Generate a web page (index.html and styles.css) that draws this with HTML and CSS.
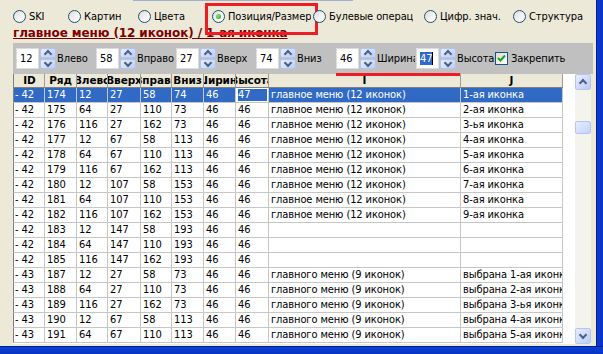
FILE: index.html
```html
<!DOCTYPE html>
<html lang="ru">
<head>
    <meta charset="UTF-8">
    <meta name="viewport" content="width=device-width, initial-scale=1.0">
    <title>Позиция/Размер</title>
    <link rel="stylesheet" href="styles.css">
</head>
<body>
    <div class="window">
        <div class="client">
            <div class="topline"></div>
            <div class="radios">
                <div class="radio opt-ski"><span class="dot"></span><span class="text">SKI</span></div>
                <div class="radio opt-pic"><span class="dot"></span><span class="text">Картинки</span></div>
                <div class="radio opt-color"><span class="dot"></span><span class="text">Цвета</span></div>
                <div class="radio opt-pos on"><span class="dot"></span><span class="text">Позиция/Размер</span></div>
                <div class="radio opt-bool"><span class="dot"></span><span class="text">Булевые операции</span></div>
                <div class="radio opt-num"><span class="dot"></span><span class="text">Цифр. знач.</span></div>
                <div class="radio opt-struct"><span class="dot"></span><span class="text">Структура</span></div>
            </div>
            <div class="title">главное меню (12 иконок) / 1-ая иконка</div>
            <div class="toolbar">
                <div class="spin-group">
                    <div class="edit">12</div>
                    <div class="spin"><span class="up"></span><span class="down"></span></div>
                    <div class="spin-label">Влево</div>
                </div>
                <div class="spin-group">
                    <div class="edit">58</div>
                    <div class="spin"><span class="up"></span><span class="down"></span></div>
                    <div class="spin-label">Вправо</div>
                </div>
                <div class="spin-group">
                    <div class="edit">27</div>
                    <div class="spin"><span class="up"></span><span class="down"></span></div>
                    <div class="spin-label">Вверх</div>
                </div>
                <div class="spin-group">
                    <div class="edit">74</div>
                    <div class="spin"><span class="up"></span><span class="down"></span></div>
                    <div class="spin-label">Вниз</div>
                </div>
                <div class="spin-group">
                    <div class="edit">46</div>
                    <div class="spin"><span class="up"></span><span class="down"></span></div>
                    <div class="spin-label">Ширина</div>
                </div>
                <div class="spin-group">
                    <div class="edit"><span class="sel">47</span><span class="caret"></span></div>
                    <div class="spin"><span class="up"></span><span class="down"></span></div>
                    <div class="spin-label">Высота</div>
                </div>
                <div class="check">
                    <span class="box">
                        <svg width="9" height="9" viewBox="0 0 9 9"><polyline points="1,4 3.5,6.5 8,1.5" fill="none" stroke="#21a121" stroke-width="2"/></svg>
                    </span>
                    <span>Закрепить</span>
                </div>
                <div class="mark"></div>
            </div>
            <div class="grid">
                <table class="data">
                    <thead>
                        <tr>
                            <th class="c-id"><div><span>ID</span></div></th>
                            <th class="c-n"><div><span>Ряд</span></div></th>
                            <th class="c-s"><div><span>Влево</span></div></th>
                            <th class="c-w"><div><span>Вверх</span></div></th>
                            <th class="c-s"><div><span>Вправо</span></div></th>
                            <th class="c-n"><div><span>Вниз</span></div></th>
                            <th class="c-n"><div><span>Ширина</span></div></th>
                            <th class="c-w"><div><span>Высота</span></div></th>
                            <th class="c-i"><div><span>I</span></div></th>
                            <th class="c-j"><div><span>J</span></div></th>
                        </tr>
                    </thead>
                    <tbody>
                        <tr class="current"><td>- 42</td><td>174</td><td>12</td><td>27</td><td>58</td><td>74</td><td>46</td><td class="editing"><span>47</span></td><td>главное меню (12 иконок)</td><td>1-ая иконка</td></tr>
                        <tr><td>- 42</td><td>175</td><td>64</td><td>27</td><td>110</td><td>73</td><td>46</td><td>46</td><td>главное меню (12 иконок)</td><td>2-ая иконка</td></tr>
                        <tr><td>- 42</td><td>176</td><td>116</td><td>27</td><td>162</td><td>73</td><td>46</td><td>46</td><td>главное меню (12 иконок)</td><td>3-ья иконка</td></tr>
                        <tr><td>- 42</td><td>177</td><td>12</td><td>67</td><td>58</td><td>113</td><td>46</td><td>46</td><td>главное меню (12 иконок)</td><td>4-ая иконка</td></tr>
                        <tr><td>- 42</td><td>178</td><td>64</td><td>67</td><td>110</td><td>113</td><td>46</td><td>46</td><td>главное меню (12 иконок)</td><td>5-ая иконка</td></tr>
                        <tr><td>- 42</td><td>179</td><td>116</td><td>67</td><td>162</td><td>113</td><td>46</td><td>46</td><td>главное меню (12 иконок)</td><td>6-ая иконка</td></tr>
                        <tr><td>- 42</td><td>180</td><td>12</td><td>107</td><td>58</td><td>153</td><td>46</td><td>46</td><td>главное меню (12 иконок)</td><td>7-ая иконка</td></tr>
                        <tr><td>- 42</td><td>181</td><td>64</td><td>107</td><td>110</td><td>153</td><td>46</td><td>46</td><td>главное меню (12 иконок)</td><td>8-ая иконка</td></tr>
                        <tr><td>- 42</td><td>182</td><td>116</td><td>107</td><td>162</td><td>153</td><td>46</td><td>46</td><td>главное меню (12 иконок)</td><td>9-ая иконка</td></tr>
                        <tr><td>- 42</td><td>183</td><td>12</td><td>147</td><td>58</td><td>193</td><td>46</td><td>46</td><td></td><td></td></tr>
                        <tr><td>- 42</td><td>184</td><td>64</td><td>147</td><td>110</td><td>193</td><td>46</td><td>46</td><td></td><td></td></tr>
                        <tr><td>- 42</td><td>185</td><td>116</td><td>147</td><td>162</td><td>193</td><td>46</td><td>46</td><td></td><td></td></tr>
                        <tr><td>- 43</td><td>187</td><td>12</td><td>27</td><td>58</td><td>73</td><td>46</td><td>46</td><td>главного меню (9 иконок)</td><td>выбрана 1-ая иконка</td></tr>
                        <tr><td>- 43</td><td>188</td><td>64</td><td>27</td><td>110</td><td>73</td><td>46</td><td>46</td><td>главного меню (9 иконок)</td><td>выбрана 2-ая иконка</td></tr>
                        <tr><td>- 43</td><td>189</td><td>116</td><td>27</td><td>162</td><td>73</td><td>46</td><td>46</td><td>главного меню (9 иконок)</td><td>выбрана 3-ья иконка</td></tr>
                        <tr><td>- 43</td><td>190</td><td>12</td><td>67</td><td>58</td><td>113</td><td>46</td><td>46</td><td>главного меню (9 иконок)</td><td>выбрана 4-ая иконка</td></tr>
                        <tr><td>- 43</td><td>191</td><td>64</td><td>67</td><td>110</td><td>113</td><td>46</td><td>46</td><td>главного меню (9 иконок)</td><td>выбрана 5-ая иконка</td></tr>
                    </tbody>
                </table>
                <div class="scrollbar">
                    <div class="sb-btn up"></div>
                    <div class="sb-track"><div class="sb-thumb"></div></div>
                    <div class="sb-btn down"></div>
                </div>
            </div>
        </div>
        <div class="frame-right"></div>
    </div>
    <div class="frame-bottom"></div>
</body>
</html>
```

FILE: styles.css
```css
* {
    box-sizing: border-box;
}
body {
    margin: 0;
    width: 603px;
    height: 354px;
    overflow: hidden;
    background-color: #ece9d8;
    font-family: "DejaVu Sans Condensed", "DejaVu Sans", sans-serif;
    font-stretch: semi-condensed;
    font-size: 11px;
    letter-spacing: -0.1px;
    color: #000;
}
.window {
    display: flex;
    height: 346px;
}
.client {
    width: 596px;
}
.frame-right {
    width: 7px;
    background: linear-gradient(to right, #0a3ad6, #0831c4);
    border-left: 1px solid #001f8c;
}
.frame-bottom {
    height: 8px;
    background: linear-gradient(#0a40d6, #0834c2);
    border-top: 1px solid #001f8c;
}
.topline {
    height: 1px;
    width: 220px;
    margin-left: 133px;
    background-color: #9fb2c9;
}

/* radio row */
.radios {
    display: flex;
    align-items: center;
    height: 16px;
    margin-top: 7px;
    padding-left: 13px;
}
.radio {
    position: relative;
    display: flex;
    align-items: center;
    gap: 3px;
    height: 16px;
    white-space: nowrap;
}
.radio .text {
    overflow: hidden;
    min-width: 0;
}
.opt-ski { width: 55px; }
.opt-pic { width: 53px; margin-right: 17px; }
.opt-color { width: 74px; }
.opt-pos { width: 101px; }
.opt-bool { width: 100px; margin-right: 11px; }
.opt-num { width: 89px; }
.dot {
    flex: none;
    width: 13px;
    height: 13px;
    border-radius: 50%;
    border: 1px solid #1c5180;
    background: linear-gradient(135deg, #dcdbd3, #f4f3ee 55%, #fff);
    display: flex;
    align-items: center;
    justify-content: center;
}
.radio.on .dot::before {
    content: "";
    width: 5px;
    height: 5px;
    border-radius: 50%;
    background: radial-gradient(circle at 35% 35%, #7de67d, #21a121);
}
.radio.on::after {
    content: "";
    position: absolute;
    left: -7px;
    top: -5px;
    width: 107px;
    height: 26px;
    border: 3px solid #ee1c25;
}

.title {
    height: 19px;
    line-height: 19px;
    margin-left: 13px;
    font-family: "DejaVu Sans", sans-serif;
    font-stretch: normal;
    font-size: 12px;
    font-weight: bold;
    letter-spacing: -0.1px;
    color: #800000;
    text-decoration: underline;
}

/* spinners */
.toolbar {
    position: relative;
    display: flex;
    align-items: center;
    width: 580px;
    height: 31px;
    margin-left: 13px;
    padding-left: 2px;
    background-color: #c0c0c0;
}
.spin-group {
    display: flex;
    align-items: center;
    width: 80px;
}
.edit {
    display: flex;
    align-items: center;
    width: 23px;
    height: 21px;
    margin-left: 1px;
    padding-left: 3px;
    background-color: #fff;
    border: 1px solid #dcdcdc;
}
.edit .sel {
    background-color: #316ac5;
    color: #fff;
}
.edit .caret {
    width: 1px;
    height: 13px;
    background-color: #000;
}
.spin {
    display: flex;
    flex-direction: column;
    gap: 1px;
    width: 16px;
    height: 21px;
    margin-left: 1px;
}
.spin span,
.sb-btn {
    flex: 1;
    display: flex;
    align-items: center;
    justify-content: center;
    border: 1px solid #b4c6f0;
    border-radius: 2px;
    background: linear-gradient(135deg, #e6edfe, #bacdf8);
}
.spin span::before,
.sb-btn::before {
    content: "";
    width: 4px;
    height: 4px;
    border-left: 2px solid #4d6185;
    border-top: 2px solid #4d6185;
}
.spin .up::before,
.sb-btn.up::before {
    transform: rotate(45deg);
    margin-top: 2px;
}
.spin .down::before,
.sb-btn.down::before {
    transform: rotate(225deg);
    margin-top: -2px;
}
.spin-label {
    width: 39px;
    padding-left: 1px;
    overflow: hidden;
    white-space: nowrap;
}
.check {
    display: flex;
    align-items: center;
    gap: 3px;
}
.box {
    display: flex;
    align-items: center;
    justify-content: center;
    width: 13px;
    height: 13px;
    border: 1px solid #1c5180;
    background: linear-gradient(135deg, #dcdbd3, #fff);
}
.mark {
    position: absolute;
    left: 323px;
    bottom: -2px;
    width: 124px;
    height: 3px;
    background-color: #ee1c25;
    z-index: 2;
}

/* grid */
.grid {
    display: flex;
    width: 578px;
    height: 270px;
    margin-left: 13px;
    background-color: #fff;
}
.data {
    align-self: flex-start;
    width: 550px;
    table-layout: fixed;
    border-collapse: separate;
    border-spacing: 0;
}
.data th,
.data td {
    padding: 0 0 0 2px;
    white-space: nowrap;
    overflow: hidden;
    text-align: left;
    font-weight: normal;
}
.data th {
    padding: 0;
    line-height: 13px;
    font-family: "DejaVu Sans", sans-serif;
    font-stretch: normal;
    font-size: 10.5px;
    font-weight: bold;
    background-color: #ece9d8;
    border-right: 1px solid #9d9c96;
    border-bottom: 1px solid #808080;
}
.data th div {
    display: flex;
    justify-content: center;
    width: 100%;
    overflow: clip;
}
.data th span {
    flex: none;
}
.data td {
    line-height: 14px;
    border-right: 1px solid #c6c6c6;
    border-bottom: 1px solid #c6c6c6;
}
.data th:first-child,
.data td:first-child {
    border-left: 1px solid #808080;
    padding-left: 1px;
}
.c-id { width: 32px; }
.c-n { width: 32px; }
.c-s { width: 31px; }
.c-w { width: 33px; }
.c-i { width: 192px; }
.c-j { width: 102px; }
.data tr.current td {
    background-color: #316ac5;
    color: #fff;
}
.data tr.current td.editing {
    background-color: #fff;
    padding: 1px 1px 1px 2px;
    line-height: 12px;
}
.editing span {
    display: block;
    background-color: #316ac5;
    color: #fff;
}
.scrollbar {
    display: flex;
    flex-direction: column;
    width: 16px;
    margin-left: auto;
    background-color: #f4f3ee;
}
.sb-btn {
    flex: none;
    height: 16px;
}
.sb-track {
    flex: 1;
}
.sb-thumb {
    height: 13px;
    margin-top: 31px;
    border: 1px solid #b4c6f0;
    border-radius: 2px;
    background: linear-gradient(135deg, #e6edfe, #c2d3fb);
}
```
